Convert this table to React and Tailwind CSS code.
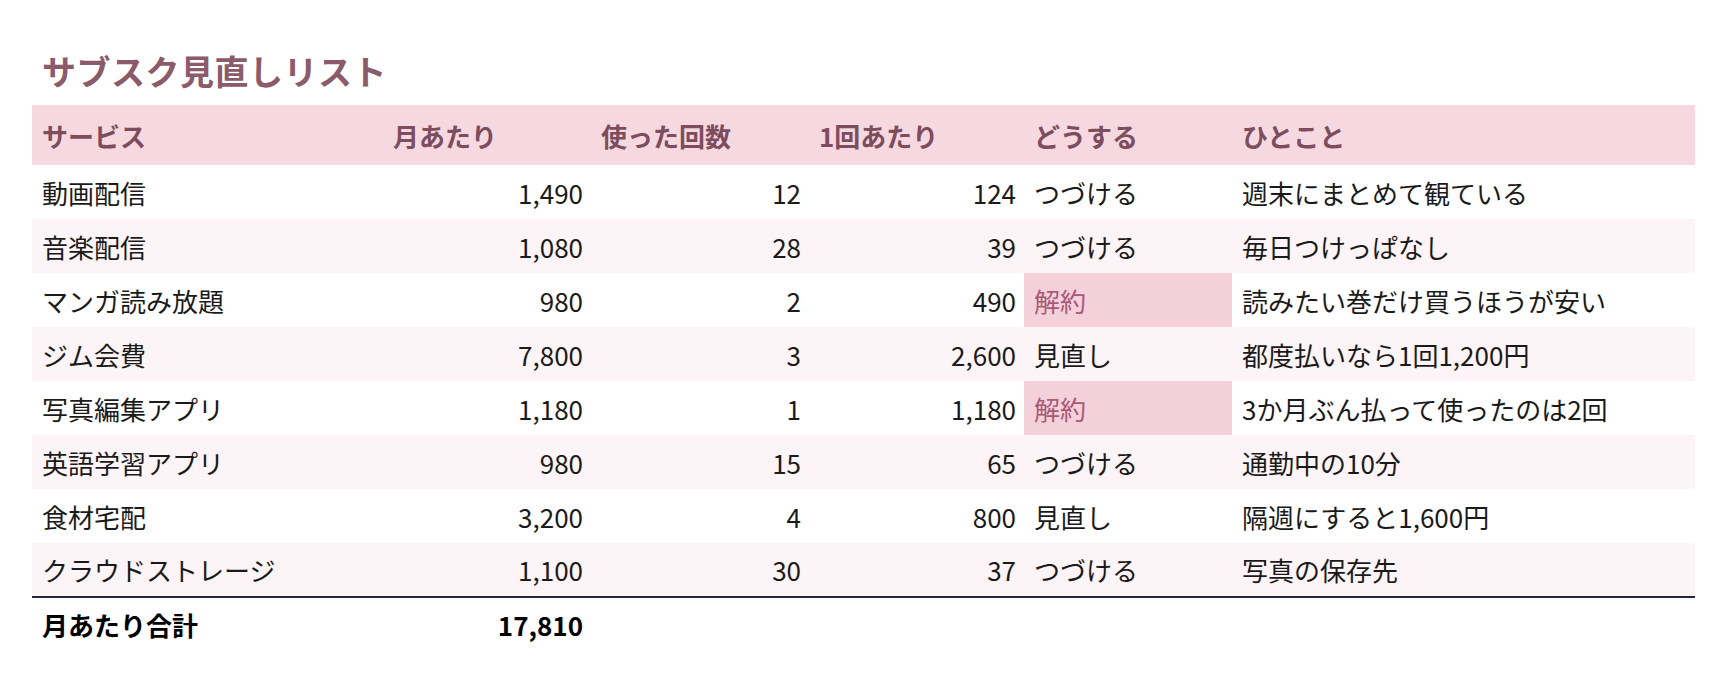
const rows = [
  ["動画配信", "1,490", "12", "124", "つづける", "週末にまとめて観ている"],
  ["音楽配信", "1,080", "28", "39", "つづける", "毎日つけっぱなし"],
  ["マンガ読み放題", "980", "2", "490", "解約", "読みたい巻だけ買うほうが安い"],
  ["ジム会費", "7,800", "3", "2,600", "見直し", "都度払いなら1回1,200円"],
  ["写真編集アプリ", "1,180", "1", "1,180", "解約", "3か月ぶん払って使ったのは2回"],
  ["英語学習アプリ", "980", "15", "65", "つづける", "通勤中の10分"],
  ["食材宅配", "3,200", "4", "800", "見直し", "隔週にすると1,600円"],
  ["クラウドストレージ", "1,100", "30", "37", "つづける", "写真の保存先"],
];

export default function App() {
  return (
    <div
      className="min-h-[682px] bg-white pt-[51px] pl-[32px] pr-[33px] text-[#1a1a1a]"
      style={{ fontFamily: '"Noto Sans CJK JP", "Noto Sans", sans-serif' }}
    >
      <h1 className="pl-[10px] mb-[14px] text-[34px] leading-[40px] font-bold tracking-[0.5px] text-[#8b5a6b]">
        サブスク見直しリスト
      </h1>

      <table className="w-[1663px] table-fixed border-collapse text-[26px]">
        <colgroup>
          <col className="w-[351px]" />
          <col className="w-[208px]" />
          <col className="w-[218px]" />
          <col className="w-[215px]" />
          <col className="w-[208px]" />
          <col className="w-[463px]" />
        </colgroup>
        <thead>
          <tr className="h-[60px] bg-[#f6d9e0] text-[#7d4d5d] text-left">
            <th className="px-[10px] font-bold">サービス</th>
            <th className="px-[10px] font-bold">月あたり</th>
            <th className="px-[10px] font-bold">使った回数</th>
            <th className="px-[10px] font-bold">1回あたり</th>
            <th className="px-[10px] font-bold">どうする</th>
            <th className="px-[10px] font-bold">ひとこと</th>
          </tr>
        </thead>
        <tbody>
          {rows.map((r, i) => (
            <tr
              key={r[0]}
              className={
                "h-[54px] " +
                (i % 2 === 1 ? "bg-[#fcf4f6]" : "bg-white") +
                (i === rows.length - 1 ? " border-b-2 border-[#1f2937]" : "")
              }
            >
              <td className="px-[10px]">{r[0]}</td>
              <td className="pl-[10px] pr-[8px] text-right">{r[1]}</td>
              <td className="pl-[10px] pr-[8px] text-right">{r[2]}</td>
              <td className="pl-[10px] pr-[8px] text-right">{r[3]}</td>
              <td
                className={
                  r[4] === "解約"
                    ? "px-[10px] bg-[#f4d0db] text-[#a85a75]"
                    : "px-[10px]"
                }
              >
                {r[4]}
              </td>
              <td className="px-[10px]">{r[5]}</td>
            </tr>
          ))}
        </tbody>
        <tfoot>
          <tr className="h-[54px] font-bold text-black">
            <td className="px-[10px]">月あたり合計</td>
            <td className="pl-[10px] pr-[8px] text-right">17,810</td>
            <td />
            <td />
            <td />
            <td />
          </tr>
        </tfoot>
      </table>
    </div>
  );
}
